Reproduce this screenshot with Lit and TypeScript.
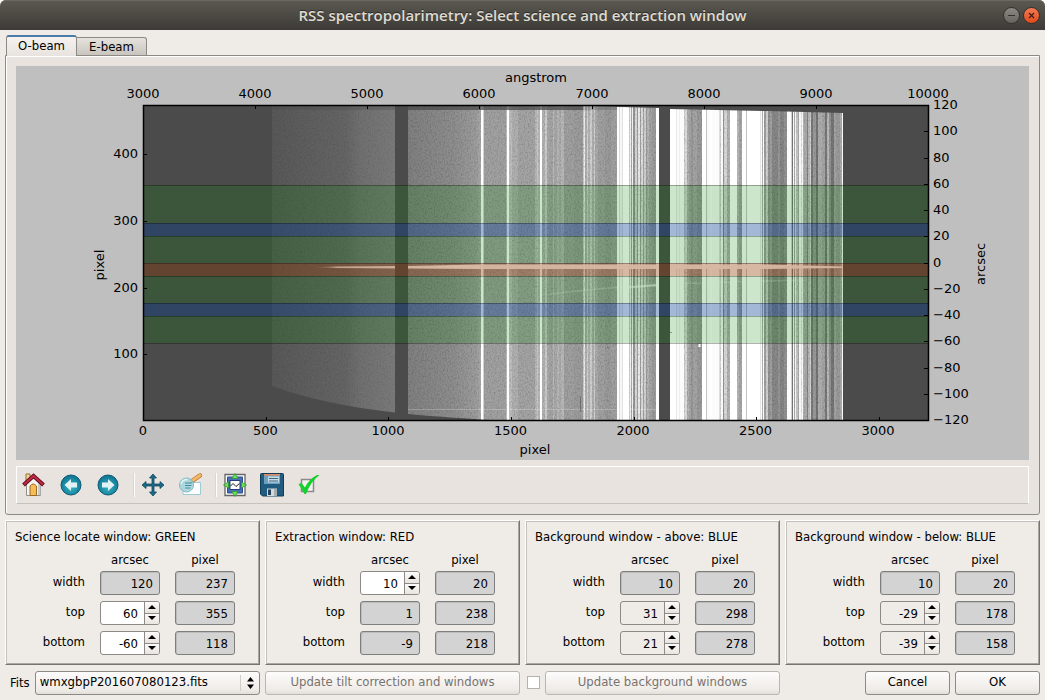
import { LitElement, html, svg, css } from "lit";
import { customElement, property, state } from "lit/decorators.js";

type Strip = [x: number, width: number, shade: number];

// Sky-line columns of the detector frame: start, width, grey level.
const GREY_STRIPS: Strip[] = [
  [484, 22, 161], [506, 1, 190], [509, 3, 190], [512, 6, 176], [518, 17, 164],
  [535, 2, 184], [537, 1, 200], [538, 2, 184], [542, 3, 178], [545, 2, 205], [547, 2, 170],
  [549, 4, 164], [553, 1, 186], [554, 3, 168], [557, 2, 182], [559, 2, 172], [561, 3, 184],
  [564, 10, 160], [574, 9, 156], [583, 1, 205], [584, 1, 238], [585, 2, 176], [587, 1, 212], [588, 2, 180],
  [590, 2, 208], [592, 2, 176], [594, 1, 206], [595, 3, 170], [598, 7, 160], [605, 6, 154], [611, 6, 160],
  [629, 1, 205], [631, 1, 170], [633, 2, 150], [635, 2, 216], [637, 1, 160], [638, 2, 236],
  [640, 1, 160], [641, 2, 222], [643, 1, 164], [644, 2, 210], [646, 1, 156], [647, 2, 180],
  [649, 3, 164], [652, 4, 156],
  [684, 1, 205], [685, 2, 220], [687, 2, 176], [689, 2, 164], [691, 2, 152], [693, 4, 164], [697, 5, 154],
  [720, 1, 212], [723, 1, 150], [724, 3, 216], [727, 3, 178], [737, 2, 184], [739, 3, 166],
  [762, 1, 180], [764, 2, 160], [766, 2, 208], [768, 2, 146], [770, 2, 160], [772, 6, 136],
  [778, 2, 150], [780, 4, 134], [784, 3, 146],
  [792, 1, 120], [794, 1, 170], [796, 2, 200], [798, 1, 170], [801, 1, 230], [803, 1, 180],
  [804, 3, 172], [807, 1, 132], [808, 2, 186], [810, 1, 214], [811, 2, 122], [813, 3, 154],
  [816, 2, 116], [818, 4, 174], [822, 3, 164], [825, 2, 120], [827, 2, 186], [829, 2, 146],
  [831, 3, 118], [834, 2, 164], [836, 4, 154], [840, 2, 172],
];

const BRIGHT_STRIPS: Strip[] = [
  [481, 2, 255], [483, 1, 210], [507, 2, 255], [540, 2, 255],
  [617, 2, 255], [619, 1, 222], [620, 2, 246], [622, 1, 226], [623, 6, 255], [630, 1, 238],
  [632, 1, 240], [656, 3, 255],
  [670, 6, 255], [676, 1, 232], [677, 2, 252], [679, 1, 238], [680, 4, 252],
  [702, 4, 255], [706, 1, 196], [707, 3, 250], [710, 2, 255], [712, 7, 252], [719, 1, 222], [721, 2, 248],
  [730, 7, 255], [742, 4, 254], [746, 1, 196], [747, 13, 255], [760, 1, 230], [761, 1, 250], [763, 1, 252],
  [787, 4, 252], [791, 1, 210], [793, 1, 250], [795, 1, 244], [799, 2, 246], [802, 1, 248],
  [842, 1, 250],
];

@customElement("spectrum-plot")
export class SpectrumPlot extends LitElement {
  static styles = css`
    :host { display: block; background: #bfbfbf; }
    svg { display: block; width: 100%; height: auto; }
    text { font: 13px "DejaVu Sans", sans-serif; fill: #000; }
    .mid { text-anchor: middle; }
    .end { text-anchor: end; }
    .tick { stroke: #000; stroke-width: 1; }
    .edge { stroke: #000; stroke-opacity: 0.3; }
    .green { fill: #008000; fill-opacity: 0.2; }
    .blue { fill: #0000ff; fill-opacity: 0.2; }
    .red { fill: #ff0000; fill-opacity: 0.2; }
    .frame { fill: none; stroke: #000; stroke-width: 1.5; }
  `;

  private strips(list: Strip[]) {
    return list.map(([x, w, s]) => svg`<rect x=${x} y="106" width=${w} height="315" fill=${`rgb(${s},${s},${s})`}></rect>`);
  }

  private band(cls: string, top: number, bottom: number) {
    return svg`
      <rect class=${cls} x="143" y=${top} width="785" height=${bottom - top}></rect>
      <path class="edge" d=${`M143 ${top + 0.5}H928M143 ${bottom + 0.5}H928`}></path>`;
  }

  render() {
    const wave = [3000, 4000, 5000, 6000, 7000, 8000, 9000, 10000];
    const pixX = [0, 500, 1000, 1500, 2000, 2500, 3000];
    const pixY = [100, 200, 300, 400];
    const arc = Array.from({ length: 13 }, (_, i) => 120 - i * 20);
    return html`
      <svg viewBox="16 66 1013 394" role="img" aria-label="O-beam spectrum with selected windows">
        <defs>
          <linearGradient id="chipA" x1="0" x2="1">
            <stop offset="0" stop-color="#585858"></stop>
            <stop offset="0.6" stop-color="#656565"></stop>
            <stop offset="0.72" stop-color="#707070"></stop>
            <stop offset="1" stop-color="#7a7a7a"></stop>
          </linearGradient>
          <linearGradient id="chipB" gradientUnits="userSpaceOnUse" x1="408" x2="484">
            <stop offset="0" stop-color="#808080"></stop>
            <stop offset="0.6" stop-color="#8e8e8e"></stop>
            <stop offset="0.9" stop-color="#9d9d9d"></stop>
            <stop offset="1" stop-color="#b4b4b4"></stop>
          </linearGradient>
          <linearGradient id="traceFade" gradientUnits="userSpaceOnUse" x1="312" x2="440">
            <stop offset="0" stop-color="#fff" stop-opacity="0"></stop>
            <stop offset="0.14" stop-color="#fff" stop-opacity="0.35"></stop>
            <stop offset="0.2" stop-color="#fff" stop-opacity="0.8"></stop>
            <stop offset="1" stop-color="#fff"></stop>
          </linearGradient>
          <filter id="grain" x="0" y="0" width="1" height="1">
            <feTurbulence type="fractalNoise" baseFrequency="0.7 0.5" numOctaves="2" seed="4"></feTurbulence>
            <feColorMatrix values="0 0 0 0 0  0 0 0 0 0  0 0 0 0 0  1.2 0 0 0 -0.5"></feColorMatrix>
          </filter>
          <clipPath id="chips">
            <path d="M272 106H395V412.5Q325 405 272 386Z M408 106H583L659 108V421H510Q450 418 408 414Z M670 109L768 111L843 113V421H670Z"></path>
          </clipPath>
        </defs>
        <rect x="143" y="105" width="785" height="316" fill="#4b4b4b"></rect>
        <g clip-path="url(#chips)">
          <rect x="272" y="106" width="123" height="315" fill="url(#chipA)"></rect>
          <rect x="408" y="106" width="76" height="315" fill="url(#chipB)"></rect>
          ${this.strips(GREY_STRIPS)}
          <rect x="272" y="106" width="136" height="315" filter="url(#grain)" opacity="0.2"></rect>
          <rect x="408" y="106" width="435" height="315" filter="url(#grain)" opacity="0.32"></rect>
          ${this.strips(BRIGHT_STRIPS)}
          <rect x="272" y="106" width="123" height="4" fill="#4b4b4b" opacity="0.35"></rect>
          <rect x="408" y="106" width="175" height="4" fill="#4b4b4b" opacity="0.75"></rect>
          <path d="M583 106H617V110H583Z" fill="#4b4b4b" opacity="0.3"></path>
          <path d="M408 409.5H690" stroke="#fff" stroke-opacity="0.22"></path>
          <path d="M312 267.5L330 266.5L408 266L480 264.5V269L408 268.5L330 268Z" fill="url(#traceFade)"></path>
          <path d="M480 264.5H768L843 266.500V268L768 269H480Z" fill="#fff" fill-opacity="0.95"></path>
          <path d="M550 294Q600 288 659 284.5M684 283.5Q740 282 800 280" fill="none" stroke="#fff" stroke-opacity="0.22" stroke-width="1.5"></path>
          <path d="M629 287.5L659 285" fill="none" stroke="#fff" stroke-opacity="0.5" stroke-width="2"></path>
          <path d="M580.5 397V412M607 347.5H609M670 332.5H672" stroke="#444" stroke-opacity="0.5"></path>
        </g>
        <path d="M699.5 344V347" stroke="#fff" stroke-width="2"></path>
        ${this.band("green", 185, 343)}
        ${this.band("blue", 223, 236)}
        ${this.band("red", 263, 276)}
        ${this.band("blue", 303, 316)}
        <rect class="frame" x="143.5" y="105.5" width="785" height="315"></rect>
        ${wave.map((v, i) => {
          const x = Math.round(143 + (i * 785) / 7);
          return svg`<path class="tick" d=${`M${x + 0.5} 105V109`}></path><text class="mid" x=${x} y="98">${v}</text>`;
        })}
        ${pixX.map((v) => {
          const x = Math.round(143 + v * 0.2453);
          return svg`<path class="tick" d=${`M${x + 0.5} 417V421`}></path><text class="mid" x=${143 + v * 0.245} y="435">${v}</text>`;
        })}
        ${pixY.map((v) => {
          const y = Math.round(421 - v * 0.667);
          return svg`<path class="tick" d=${`M143 ${y + 0.5}H147`}></path><text class="end" x="138" y=${y + 4}>${v}</text>`;
        })}
        ${arc.map((v, i) => {
          const y = Math.round(105 + i * 26.25);
          return svg`<path class="tick" d=${`M924 ${y + 0.5}H928`}></path><text x="933" y=${y + 4}>${v < 0 ? `−${-v}` : v}</text>`;
        })}
        <text class="mid" x="536" y="82">angstrom</text>
        <text class="mid" x="535" y="454">pixel</text>
        <text class="mid" transform="translate(104 265) rotate(-90)">pixel</text>
        <text class="mid" transform="translate(985 264) rotate(-90)">arcsec</text>
      </svg>`;
  }
}

interface Field {
  arcsec: number;
  pixel: number;
  mode: "fixed" | "edit" | "muted";
}

@customElement("window-group")
export class WindowGroup extends LitElement {
  @property() heading = "";
  @property({ attribute: false }) fields: Field[] = [];

  static styles = css`
    :host {
      display: block;
      box-sizing: border-box;
      padding: 6px 24px 9px 9px;
      border: 1px solid;
      border-color: #fff #777470 #777470 #fff;
      box-shadow: inset 1px 1px #c3c0bc, inset -1px -1px #a9a6a2;
    }
    h2 { margin: 0 0 3px; font-size: 13px; font-weight: normal; line-height: 20px; white-space: nowrap; }
    .grid { display: grid; grid-template-columns: 1fr 60px 60px; column-gap: 15px; row-gap: 6px; }
    .head { line-height: 20px; height: 15px; text-align: center; }
    label { text-align: right; line-height: 22px; }
    .box {
      box-sizing: border-box; width: 100%; height: 24px; margin: 0;
      border: 1px solid #8c8986; border-radius: 3px;
      font: inherit; color: #000; text-align: right;
    }
    input { appearance: textfield; outline: none; }
    input::-webkit-inner-spin-button, input::-webkit-outer-spin-button { appearance: none; margin: 0; }
    .fixed { padding: 1px 6px 0 2px; background: #d3d3d3; border-color: #7e7e7e; box-shadow: inset 1px 1px #bcbcbc; }
    .spin { display: flex; overflow: hidden; background: #fff; }
    .spin.muted { background: #efebe7; }
    .spin input {
      flex: 1; min-width: 0; box-sizing: border-box; padding: 1px 6px 0 0; border: 0;
      background: none; font: inherit; color: #000; text-align: right;
    }
    .arrows { display: flex; flex-direction: column; width: 14px; border-left: 1px solid #8c8986; }
    .arrows button {
      flex: 1; min-height: 0; padding: 0; border: 0; display: grid; place-items: center;
      background: linear-gradient(#fcfbfa, #e8e4df);
    }
    .arrows button + button { border-top: 1px solid #8c8986; }
    .arrows svg { display: block; }
  `;

  private step(index: number, delta: number) {
    this.fields = this.fields.map((f, i) => (i === index ? { ...f, arcsec: f.arcsec + delta } : f));
  }

  render() {
    const names = ["width", "top", "bottom"];
    return html`
      <h2>${this.heading}</h2>
      <div class="grid">
        <span></span><span class="head">arcsec</span><span class="head">pixel</span>
        ${this.fields.map((f, i) => html`
          <label for=${names[i]}>${names[i]}</label>
          ${f.mode === "fixed"
            ? html`<input class="box fixed" id=${names[i]} readonly .value=${String(f.arcsec)}>`
            : html`
              <div class="box spin ${f.mode}">
                <input type="number" id=${names[i]} .value=${String(f.arcsec)}>
                <div class="arrows">
                  <button aria-label="Increase ${names[i]}" @click=${() => this.step(i, 1)}>
                    <svg width="8" height="5"><path d="M4 0L8 4H0Z"></path></svg>
                  </button>
                  <button aria-label="Decrease ${names[i]}" @click=${() => this.step(i, -1)}>
                    <svg width="8" height="5"><path d="M0 0H8L4 4Z"></path></svg>
                  </button>
                </div>
              </div>`}
          <input class="box fixed" readonly aria-label="${names[i]} in pixels" .value=${String(f.pixel)}>
        `)}
      </div>`;
  }
}

const ICONS = {
  home: svg`
    <path d="M4 1h4v8H4z" fill="#f3d9a0" stroke="#9a6a2a"></path>
    <path d="M4.500 10L11.500 4L18.500 10V22.500H4.500Z" fill="#f4f4f2" stroke="#8e8e8c"></path>
    <path d="M16 10H18.500V22H16Z" fill="#c9c9c7"></path>
    <path d="M8 22.500V13Q11 9 14.500 13V22.500Z" fill="#f6bd55" stroke="#99692a"></path>
    <path d="M1.500 12L11.500 3L21.500 12" fill="none" stroke="#5d0f1e" stroke-width="4"></path>
    <path d="M2 11.500L11.500 3L21 11.500" fill="none" stroke="#c02844" stroke-width="2.200"></path>`,
  back: svg`
    <circle cx="12" cy="12" r="10" fill="url(#ball)" stroke="#0b5a70"></circle>
    <path d="M5.500 12L12 6V9.500H18V14.500H12V18Z" fill="#e3f3f5"></path>`,
  forward: svg`
    <circle cx="12" cy="12" r="10" fill="url(#ball)" stroke="#0b5a70"></circle>
    <path d="M18.500 12L12 6V9.500H6V14.500H12V18Z" fill="#e3f3f5"></path>`,
  pan: svg`
    <path d="M12 1L15.500 5H13V11H19V8.500L23 12L19 15.500V13H13V19H15.500L12 23L8.500 19H11V13H5V15.500L1 12L5 8.500V11H11V5H8.500Z"
      fill="#1d6a86" stroke="#0f4a62" stroke-width="0.800"></path>`,
  zoom: svg`
    <path d="M5 9.500H22.500V21.500H5Z" fill="#fff" stroke="#9ccbd4"></path>
    <path d="M14 8L22 2.500" stroke="#b5732c" stroke-width="4.500" stroke-linecap="round"></path>
    <path d="M14.500 7.500L22 2.500" stroke="#f6b765" stroke-width="3" stroke-linecap="round"></path>
    <circle cx="8.500" cy="12" r="7" fill="#a9d5db" fill-opacity="0.900" stroke="#7fb9c3"></circle>
    <path d="M3 11Q4.500 6 9.500 6.500" fill="none" stroke="#e3f4f6" stroke-width="1.500"></path>
    <path d="M7 10H14M7 12.500H13.500M7 15H12.500" stroke="#3c8e9e" stroke-width="1.200"></path>`,
  subplots: svg`
    <path d="M2 1.500H22V22.500H2Z" fill="#fff" stroke="#666" stroke-width="1.300"></path>
    <path d="M4.500 4H19.500V20H4.500Z" fill="#466fb5" stroke="#2d4f8e"></path>
    <path d="M7 7.500H17V16.500H7Z" fill="#fff" stroke="#28417a"></path>
    <path d="M7.500 13L10 10.500L13 13.500L16.500 10.500" fill="none" stroke="#222"></path>
    <path d="M12 0.500L15 5.500H9ZM12 23.500L15 18.500H9ZM0.500 12L5.500 9V15ZM23.500 12L18.500 9V15Z" fill="#6fe05c" stroke="#2f9d2a" stroke-width="0.800"></path>`,
  save: svg`
    <path d="M0.500 1.500Q0.500 0.500 1.500 0.500H22.500Q23.500 0.500 23.500 1.500V23H2.500L0.500 21Z" fill="#1f5c80" stroke="#123d58"></path>
    <path d="M4 1H20V11H4Z" fill="#6f9fbd"></path>
    <path d="M4 1H20V2.500H4Z" fill="#e58a5c"></path>
    <path d="M8 3.500H19V9.500H8Z" fill="#c8dce8"></path>
    <path d="M9 5.500H18M9 8H18" stroke="#3b6580"></path>
    <path d="M7 15.500H17V23H7Z" fill="#d5d9dc"></path>
    <path d="M8 16.500H11V22H8Z" fill="#25405a"></path>
    <path d="M14 16H17V23H14Z" fill="#a6adb2"></path>`,
  options: svg`
    <path d="M4.500 6.500H16.500V18.500H4.500Z" fill="#f1f1f1" stroke="#8a8a8a" stroke-width="1.500"></path>
    <path d="M1.500 11L4.500 10L8 14.500Q12 6 20 2H22.500Q14 8 9 21H7.500Z" fill="#15d02b"></path>`,
};

@customElement("app-root")
export class AppRoot extends LitElement {
  @state() private tab = 0;

  static styles = css`
    :host {
      display: block; min-height: 100vh; box-sizing: border-box; padding-bottom: 5px;
      background: #efebe7; color: #000;
      font: 13px "DejaVu Sans Condensed", "DejaVu Sans", sans-serif;
    }
    .backing { background: #fff; }
    .titlebar {
      display: grid; grid-template-columns: 1fr auto 1fr; align-items: center;
      height: 30px; box-sizing: border-box; padding: 0 5px;
      border-radius: 6px 6px 0 0;
      background: linear-gradient(#5c5952, #3d3b37); box-shadow: inset 0 1px #6b6860;
      color: #dfdbd2;
    }
    h1 { grid-column: 2; margin: 0; font: 600 15px/30px "Open Sans", "Noto Sans", sans-serif; text-shadow: 0 -1px #2c2a27; }
    .controls { display: flex; justify-content: flex-end; gap: 3px; }
    .controls button { width: 17px; height: 17px; padding: 0; border: 1px solid #33312d; border-radius: 50%; background: linear-gradient(#8b8982, #66645e); }
    .controls .close { background: linear-gradient(#f37b55, #df4a1b); }
    .controls svg { display: block; }
    .tabs { display: flex; align-items: flex-end; height: 20px; padding: 5px 6px 0; }
    .tabs button {
      width: 70px; height: 18px; padding: 0; border: 1px solid #8c8986; border-bottom: 0; border-left: 0;
      border-radius: 0 3px 0 0; background: linear-gradient(#e6e2dd, #c9c5be); color: #000; font: inherit;
    }
    .tabs .active {
      position: relative; width: 71px; height: 21px; margin-bottom: -1px; padding-bottom: 2px;
      border: 1px solid #8c8986; border-bottom: 0;
      border-top: 2px solid #4a7ba8; border-radius: 3px 3px 0 0; background: linear-gradient(#f5f2ef, #e8e3df);
    }
    .panel {
      margin: 0 5px 5px; padding: 10px; border: 1px solid #8c8986; border-radius: 0 0 3px 3px;
      box-shadow: inset 1px 1px #fff; background: #e8e3df;
    }
    .toolbar {
      display: flex; align-items: center; height: 36px; margin-top: 6px; padding-left: 5px;
      border: 1px solid; border-color: #fff #fff #c6c2bd #fff;
    }
    .tool { width: 24px; height: 24px; padding: 0; margin-right: 13px; border: 0; background: none; }
    .tool svg { display: block; }
    .rule { width: 1px; height: 24px; margin-right: 6px; background: #fff; border-left: 1px solid #dad6d2; }
    .groups, .footer { display: grid; grid-template-columns: repeat(4, minmax(0, 1fr)); gap: 5px; margin: 0 5px; }
    .footer { margin-top: 6px; }
    .cell { display: flex; align-items: center; gap: 5px; height: 24px; }
    .push { justify-content: flex-end; }
    .btn, select {
      box-sizing: border-box; height: 24px; padding: 0 4px; border: 1px solid #8c8986; border-radius: 3px;
      background: linear-gradient(#fdfcfc, #efebe7 80%, #e2deda); color: #000; font: inherit; line-height: 20px;
    }
    .btn { width: 85px; padding-bottom: 2px; }
    .fill { flex: 1; }
    .btn:disabled { color: #77736f; border-color: #bab6b1; }
    .cell label { padding: 0 0 2px 5px; }
    .combo { flex: 1; display: grid; align-items: center; }
    .combo > * { grid-area: 1 / 1; }
    select { width: 100%; padding-bottom: 2px; appearance: none; }
    .combo svg { justify-self: end; margin-right: 4px; pointer-events: none; }
    input { appearance: none; width: 13px; height: 13px; margin: 0 0 0 2px; border: 1px solid #b5b1ad; background: #fff; }
    .check { display: flex; width: 15px; padding-bottom: 2px; }
  `;

  private tool(label: string, icon: unknown) {
    return html`<button class="tool" aria-label=${label}>
      <svg width="24" height="24" viewBox="0 0 24 24">
        <defs>
          <radialGradient id="ball" cx="0.5" cy="0.6" r="0.6">
            <stop offset="0" stop-color="#35b5c6"></stop>
            <stop offset="1" stop-color="#0d7190"></stop>
          </radialGradient>
        </defs>
        ${icon}
      </svg>
    </button>`;
  }

  private groups: { heading: string; fields: Field[] }[] = [
    { heading: "Science locate window: GREEN", fields: [
      { arcsec: 120, pixel: 237, mode: "fixed" },
      { arcsec: 60, pixel: 355, mode: "edit" },
      { arcsec: -60, pixel: 118, mode: "edit" } ] },
    { heading: "Extraction window: RED", fields: [
      { arcsec: 10, pixel: 20, mode: "edit" },
      { arcsec: 1, pixel: 238, mode: "fixed" },
      { arcsec: -9, pixel: 218, mode: "fixed" } ] },
    { heading: "Background window - above: BLUE", fields: [
      { arcsec: 10, pixel: 20, mode: "fixed" },
      { arcsec: 31, pixel: 298, mode: "muted" },
      { arcsec: 21, pixel: 278, mode: "muted" } ] },
    { heading: "Background window - below: BLUE", fields: [
      { arcsec: 10, pixel: 20, mode: "fixed" },
      { arcsec: -29, pixel: 178, mode: "muted" },
      { arcsec: -39, pixel: 158, mode: "muted" } ] },
  ];

  render() {
    return html`
      <div class="backing">
        <header class="titlebar">
          <h1>RSS spectropolarimetry: Select science and extraction window</h1>
          <div class="controls">
            <button aria-label="Minimize"><svg width="15" height="15"><path d="M4 7.500H11" stroke="#33312d"></path></svg></button>
            <button class="close" aria-label="Close"><svg width="15" height="15"><path d="M5 5L10 10M10 5L5 10" stroke="#46200f" stroke-width="1.300"></path></svg></button>
          </div>
        </header>
      </div>
      <div class="tabs" role="tablist">
        ${["O-beam", "E-beam"].map((name, i) => html`
          <button role="tab" aria-selected=${this.tab === i} class=${this.tab === i ? "active" : ""}
            @click=${() => (this.tab = i)}>${name}</button>`)}
      </div>
      <section class="panel" role="tabpanel">
        <spectrum-plot></spectrum-plot>
        <div class="toolbar" role="toolbar">
          ${this.tool("Home", ICONS.home)}
          ${this.tool("Back", ICONS.back)}
          ${this.tool("Forward", ICONS.forward)}
          <span class="rule"></span>
          ${this.tool("Pan", ICONS.pan)}
          ${this.tool("Zoom", ICONS.zoom)}
          <span class="rule"></span>
          ${this.tool("Subplots", ICONS.subplots)}
          ${this.tool("Save", ICONS.save)}
          ${this.tool("Options", ICONS.options)}
        </div>
      </section>
      <div class="groups">
        ${this.groups.map((g) => html`<window-group .heading=${g.heading} .fields=${g.fields}></window-group>`)}
      </div>
      <footer class="footer">
        <div class="cell">
          <label for="fits">Fits</label>
          <div class="combo">
            <select id="fits"><option>wmxgbpP201607080123.fits</option></select>
            <svg width="16" height="16">
              <path d="M0.500 0V16" stroke="#d0ccc7"></path>
              <path d="M10.500 2L14 6.500H7ZM10.500 14L14 9.500H7Z"></path>
            </svg>
          </div>
        </div>
        <div class="cell"><button class="btn fill" disabled>Update tilt correction and windows</button></div>
        <div class="cell">
          <span class="check"><input type="checkbox" aria-label="Update background windows automatically"></span>
          <button class="btn fill" disabled>Update background windows</button>
        </div>
        <div class="cell push">
          <button class="btn">Cancel</button>
          <button class="btn">OK</button>
        </div>
      </footer>`;
  }
}
